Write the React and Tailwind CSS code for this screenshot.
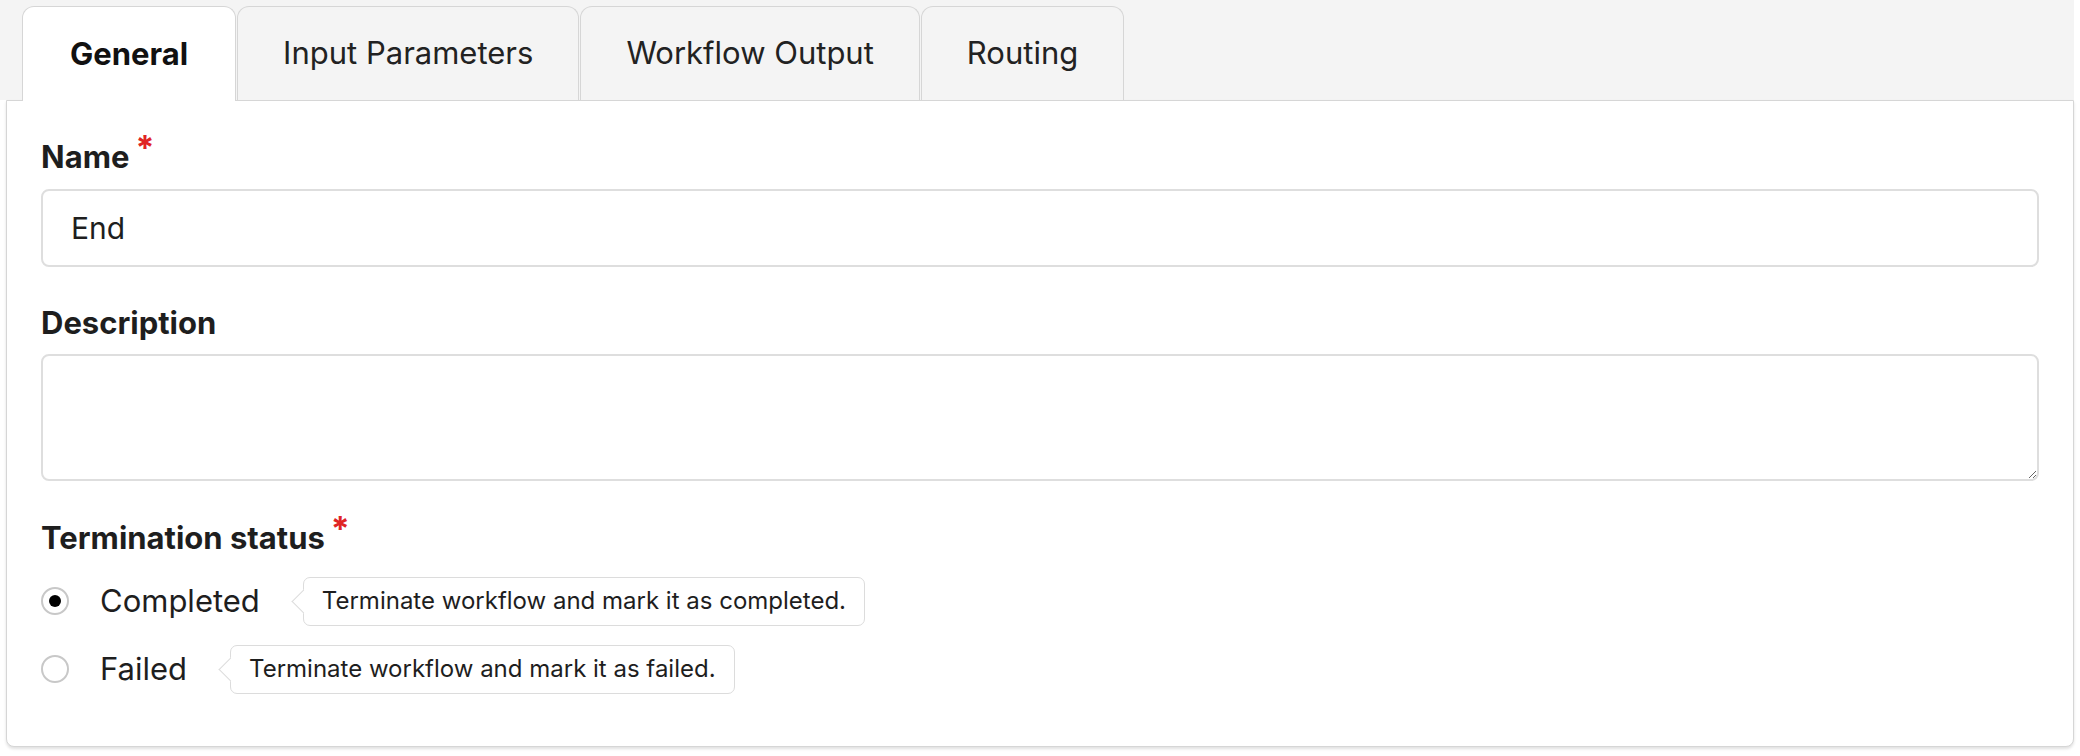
import { useState } from 'react';

const tabs = ['General', 'Input Parameters', 'Workflow Output', 'Routing'];

function Required() {
  return <span className="ml-[6px] text-[34px] font-bold leading-none text-[#e02424] relative top-[-6px]">*</span>;
}

function Hint({ children }) {
  return (
    <div className="relative ml-[43px] h-[49px] flex items-center bg-white border border-[#dcdcdc] rounded-[7px] px-[18px] text-[24px] text-[#1e1e1e]">
      <span className="absolute left-[-9px] top-1/2 -mt-[8.5px] w-[17px] h-[17px] rotate-45 bg-white border-l border-b border-[#dcdcdc]" />
      <span className="relative">{children}</span>
    </div>
  );
}

function Radio({ checked, label, hint, onSelect }) {
  return (
    <div className="flex items-center h-[50px]" onClick={onSelect}>
      <span className="w-[28px] h-[28px] rounded-full border-2 border-[#c8c8c8] bg-white flex items-center justify-center">
        {checked && <span className="w-[12px] h-[12px] rounded-full bg-black" />}
      </span>
      <span className="ml-[31px] text-[31px] text-[#1e1e1e]">{label}</span>
      <Hint>{hint}</Hint>
    </div>
  );
}

export default function App() {
  const [active, setActive] = useState(0);
  const [status, setStatus] = useState('completed');

  return (
    <div className="w-[2080px] h-[756px] bg-white text-[#1e1e1e]" style={{ fontFamily: 'Inter, "Liberation Sans", sans-serif' }}>
      <div className="w-[2074px]">
        {/* tab strip */}
        <div className="bg-[#f4f4f4] pl-[22px] pt-[6px] flex gap-[1px]">
          {tabs.map((t, i) => (
            <button
              key={t}
              onClick={() => setActive(i)}
              className={
                i === active
                  ? 'relative z-10 -mb-px h-[95px] px-[47px] bg-white border border-b-0 border-[#d6d6d6] rounded-t-[12px] text-[31px] font-bold text-[#111]'
                  : 'h-[94px] px-[45px] bg-[#f4f4f4] border border-b-0 border-[#d6d6d6] rounded-t-[12px] text-[31px] text-[#222]'
              }
            >
              {t}
            </button>
          ))}
        </div>

        {/* panel */}
        <div className="ml-[6px] border border-[#d6d6d6] rounded-b-[8px] bg-white px-[34px] pt-[36px] h-[647px] shadow-[0_2px_3px_rgba(0,0,0,0.12)]">
          <div className="flex items-start text-[31px] font-bold leading-[40px]">
            Name
            <Required />
          </div>
          <input
            defaultValue="End"
            className="mt-[12px] w-full h-[78px] border-2 border-[#dedede] rounded-[8px] px-[28px] text-[30px] text-[#1e1e1e] outline-none"
          />

          <div className="mt-[36px] text-[31px] font-bold leading-[40px]">Description</div>
          <textarea className="mt-[11px] block w-full h-[127px] border-2 border-[#dedede] rounded-[8px] px-[28px] py-[16px] text-[30px] outline-none resize-y" />

          <div className="mt-[37px] flex items-start text-[31px] font-bold leading-[40px]">
            Termination status
            <Required />
          </div>
          <div className="mt-[18px] flex flex-col gap-[18px]">
            <Radio
              checked={status === 'completed'}
              label="Completed"
              hint="Terminate workflow and mark it as completed."
              onSelect={() => setStatus('completed')}
            />
            <Radio
              checked={status === 'failed'}
              label="Failed"
              hint="Terminate workflow and mark it as failed."
              onSelect={() => setStatus('failed')}
            />
          </div>
        </div>
      </div>
    </div>
  );
}
